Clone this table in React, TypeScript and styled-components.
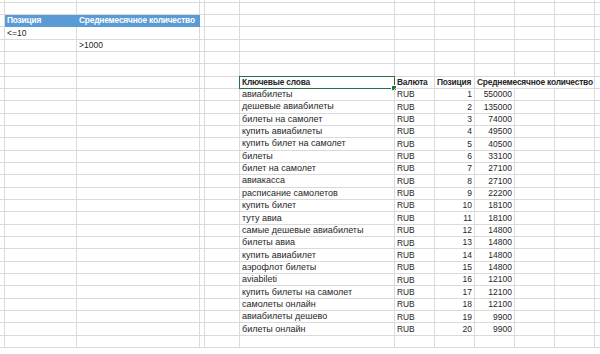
import React from 'react';
import styled, { createGlobalStyle } from 'styled-components';

const GlobalStyle = createGlobalStyle`
  html, body {
    margin: 0;
    padding: 0;
    background: #ffffff;
    overflow: hidden;
  }
`;

const COLS = [5, 72, 123, 4, 36, 155, 40, 40, 40, 40, 40, 40, 40];
const ROWS = 29;

type Kind = 'word' | 'code' | 'num' | 'head';

interface CellSpec {
  col: number;
  span?: number;
  text?: string;
  kind?: Kind;
  right?: boolean;
  band?: boolean;
  selected?: boolean;
}

const keywords: [string, number][] = [
  ['авиабилеты', 550000],
  ['дешевые авиабилеты', 135000],
  ['билеты на самолет', 74000],
  ['купить авиабилеты', 49500],
  ['купить билет на самолет', 40500],
  ['билеты', 33100],
  ['билет на самолет', 27100],
  ['авиакасса', 27100],
  ['расписание самолетов', 22200],
  ['купить билет', 18100],
  ['туту авиа', 18100],
  ['самые дешевые авиабилеты', 14800],
  ['билеты авиа', 14800],
  ['купить авиабилет', 14800],
  ['аэрофлот билеты', 14800],
  ['aviabileti', 12100],
  ['купить билеты на самолет', 12100],
  ['самолеты онлайн', 12100],
  ['авиабилеты дешево', 9900],
  ['билеты онлайн', 9900],
];

const sizes: Record<Kind, string> = {
  word: 'font-size: 9px;',
  code: 'font-size: 8.4px;',
  num: 'font-size: 8.5px;',
  head: 'font-size: 8.4px; font-weight: 700; letter-spacing: -0.2px;',
};

const Sheet = styled.div`
  display: grid;
  grid-template-columns: ${COLS.map(c => `${c}px`).join(' ')};
  grid-template-rows: 2.5px repeat(${ROWS - 1}, 12.35px);
  width: 600px;
  height: 354px;
  overflow: hidden;
  font-family: 'Liberation Sans', Arial, sans-serif;
  color: #262626;
`;

const Cell = styled.div<{ $span: number; $band?: boolean; $kind: Kind; $right?: boolean }>`
  position: relative;
  grid-column: span ${({ $span }) => $span};
  display: flex;
  align-items: center;
  justify-content: ${({ $right }) => ($right ? 'flex-end' : 'flex-start')};
  padding: 0 2px;
  border-right: 1px solid ${({ $band }) => ($band ? '#5b9bd5' : '#dadada')};
  border-bottom: 1px solid ${({ $band }) => ($band ? '#5b9bd5' : '#dadada')};
  background: ${({ $band }) => ($band ? '#5b9bd5' : 'transparent')};
  color: ${({ $band }) => ($band ? '#ffffff' : 'inherit')};
  white-space: nowrap;
  line-height: 1;
  min-width: 0;
  ${({ $kind }) => sizes[$kind]}
`;

const Selection = styled.span`
  position: absolute;
  left: -1px;
  top: -1px;
  right: -1px;
  bottom: -1px;
  border: 1.5px solid #217346;
  pointer-events: none;

  &::after {
    content: '';
    position: absolute;
    right: -3px;
    bottom: -3px;
    width: 4px;
    height: 4px;
    background: #217346;
    border: 1px solid #ffffff;
  }
`;

function rowSpecs(r: number): CellSpec[] {
  if (r === 2) {
    return [
      { col: 1, text: 'Позиция', band: true, kind: 'head' },
      { col: 2, text: 'Среднемесячное количество', band: true, kind: 'head' },
    ];
  }
  if (r === 3) return [{ col: 1, text: '<=10', kind: 'num' }];
  if (r === 4) return [{ col: 2, text: '>1000', kind: 'num' }];
  if (r === 7) {
    return [
      { col: 5, text: 'Ключевые слова', kind: 'head', selected: true },
      { col: 6, text: 'Валюта', kind: 'head' },
      { col: 7, text: 'Позиция', kind: 'head' },
      { col: 8, span: 3, text: 'Среднемесячное количество', kind: 'head' },
    ];
  }
  const i = r - 8;
  if (i >= 0 && i < keywords.length) {
    const [word, volume] = keywords[i];
    return [
      { col: 5, text: word, kind: 'word' },
      { col: 6, text: 'RUB', kind: 'code' },
      { col: 7, text: String(i + 1), kind: 'num', right: true },
      { col: 8, text: String(volume), kind: 'num', right: true },
    ];
  }
  return [];
}

function renderRow(r: number) {
  const specs = rowSpecs(r);
  const cells: React.ReactNode[] = [];
  let c = 0;
  while (c < COLS.length) {
    const s = specs.find(x => x.col === c);
    const span = s?.span ?? 1;
    cells.push(
      <Cell key={`${r}-${c}`} $span={span} $band={s?.band} $kind={s?.kind ?? 'word'} $right={s?.right}>
        {s?.text}
        {s?.selected && <Selection />}
      </Cell>
    );
    c += span;
  }
  return cells;
}

export default function App() {
  return (
    <>
      <GlobalStyle />
      <Sheet>{Array.from({ length: ROWS }, (_, r) => renderRow(r))}</Sheet>
    </>
  );
}
